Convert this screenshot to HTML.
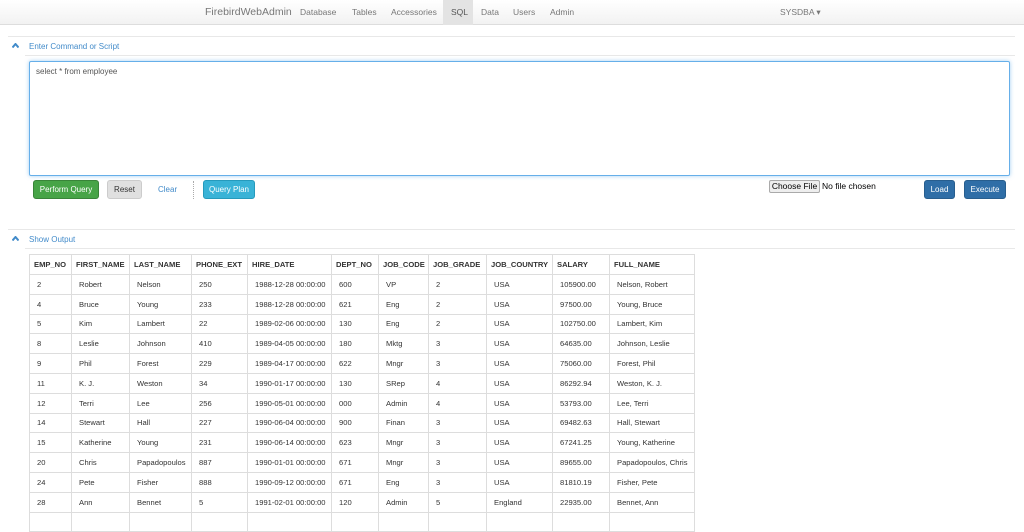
<!DOCTYPE html>
<html><head><style>
*{box-sizing:border-box;margin:0;padding:0}
body{width:1024px;height:516px;overflow:hidden;background:#fff;font-family:"Liberation Sans",sans-serif;font-size:8px;color:#333;position:relative}
.nav{position:absolute;left:0;top:0;width:1024px;height:25px;background:linear-gradient(#fff,#f2f2f2);border-bottom:1px solid #ddd}
.nav span{position:absolute;top:7px;color:#777;font-size:8.5px}
.brand{font-size:10.5px!important;top:6px!important;color:#777}
.act{position:absolute;left:443px;top:0;width:30px;height:25px;background:#e3e3e3}
.sec{position:absolute;left:8px;width:1007px;border-top:1px solid #e8e8e8}
.hd{position:absolute;color:#428bca;font-size:8px}
.chev{position:absolute;width:7px;height:5px}
.ln{position:absolute;left:25px;width:990px;border-top:1px solid #e8e8e8}
.ta{position:absolute;left:29px;top:61px;width:981px;height:115px;border:1px solid #66afe9;border-radius:2px;box-shadow:0 0 4px rgba(102,175,233,.6);padding:5px 6px;font-size:8px;color:#555}
.btn{position:absolute;height:19px;border-radius:3px;font-size:8px;text-align:center;line-height:17px;color:#fff}
table{position:absolute;left:29px;top:254px;border-collapse:collapse;font-size:7.6px;table-layout:fixed;width:665px}
td,th{border:1px solid #ddd;height:19.8px;padding:0 4px;text-align:left;white-space:nowrap;overflow:hidden}
th{font-weight:bold;height:20px}
td{padding-left:7px}
</style></head><body>
<div class="nav">
<div class="act"></div>
<span class="brand" style="left:205px">FirebirdWebAdmin</span>
<span style="left:300px">Database</span>
<span style="left:352px">Tables</span>
<span style="left:391px">Accessories</span>
<span style="left:451px;color:#555">SQL</span>
<span style="left:481px">Data</span>
<span style="left:513px">Users</span>
<span style="left:550px">Admin</span>
<span style="left:780px">SYSDBA ▾</span>
</div>
<div class="sec" style="top:36px"></div>
<svg class="chev" style="left:12px;top:43px" viewBox="0 0 7 5"><path d="M0.5 4.5L3.5 1L6.5 4.5" stroke="#428bca" stroke-width="2" fill="none"/></svg>
<div class="hd" style="left:29px;top:42px">Enter Command or Script</div>
<div class="ln" style="top:55px"></div>
<div class="ta">select * from employee</div>
<div class="btn" style="left:33px;top:180px;width:66px;background:#47a447;border:1px solid #398439">Perform Query</div>
<div class="btn" style="left:107px;top:180px;width:35px;background:#e0e0e0;color:#333;border:1px solid #ccc">Reset</div>
<div style="position:absolute;left:158px;top:185px;color:#428bca">Clear</div>
<div style="position:absolute;left:193px;top:181px;height:18px;border-left:1px dotted #aaa"></div>
<div class="btn" style="left:203px;top:180px;width:52px;background:#39b3d7;border:1px solid #269abc">Query Plan</div>
<div style="position:absolute;left:769px;top:180px;width:51px;height:13px;border:1px solid #aaa;background:#eee;border-radius:2px;font-size:8.5px;text-align:center;line-height:11px;color:#000">Choose File</div>
<div style="position:absolute;left:822px;top:181px;font-size:8.5px;color:#000">No file chosen</div>
<div class="btn" style="left:924px;top:180px;width:31px;background:#2f6ea7;border:1px solid #285e8e">Load</div>
<div class="btn" style="left:964px;top:180px;width:42px;background:#2f6ea7;border:1px solid #285e8e">Execute</div>
<div class="sec" style="top:229px"></div>
<svg class="chev" style="left:12px;top:236px" viewBox="0 0 7 5"><path d="M0.5 4.5L3.5 1L6.5 4.5" stroke="#428bca" stroke-width="2" fill="none"/></svg>
<div class="hd" style="left:29px;top:235px">Show Output</div>
<div class="ln" style="top:248px"></div>
<table>
<colgroup><col style="width:42px"><col style="width:58px"><col style="width:62px"><col style="width:56px"><col style="width:84px"><col style="width:47px"><col style="width:50px"><col style="width:58px"><col style="width:66px"><col style="width:57px"><col style="width:85px"></colgroup>
<tr><th>EMP_NO</th><th>FIRST_NAME</th><th>LAST_NAME</th><th>PHONE_EXT</th><th>HIRE_DATE</th><th>DEPT_NO</th><th>JOB_CODE</th><th>JOB_GRADE</th><th>JOB_COUNTRY</th><th>SALARY</th><th>FULL_NAME</th></tr>
<tr><td>2</td><td>Robert</td><td>Nelson</td><td>250</td><td>1988-12-28 00:00:00</td><td>600</td><td>VP</td><td>2</td><td>USA</td><td>105900.00</td><td>Nelson, Robert</td></tr>
<tr><td>4</td><td>Bruce</td><td>Young</td><td>233</td><td>1988-12-28 00:00:00</td><td>621</td><td>Eng</td><td>2</td><td>USA</td><td>97500.00</td><td>Young, Bruce</td></tr>
<tr><td>5</td><td>Kim</td><td>Lambert</td><td>22</td><td>1989-02-06 00:00:00</td><td>130</td><td>Eng</td><td>2</td><td>USA</td><td>102750.00</td><td>Lambert, Kim</td></tr>
<tr><td>8</td><td>Leslie</td><td>Johnson</td><td>410</td><td>1989-04-05 00:00:00</td><td>180</td><td>Mktg</td><td>3</td><td>USA</td><td>64635.00</td><td>Johnson, Leslie</td></tr>
<tr><td>9</td><td>Phil</td><td>Forest</td><td>229</td><td>1989-04-17 00:00:00</td><td>622</td><td>Mngr</td><td>3</td><td>USA</td><td>75060.00</td><td>Forest, Phil</td></tr>
<tr><td>11</td><td>K. J.</td><td>Weston</td><td>34</td><td>1990-01-17 00:00:00</td><td>130</td><td>SRep</td><td>4</td><td>USA</td><td>86292.94</td><td>Weston, K. J.</td></tr>
<tr><td>12</td><td>Terri</td><td>Lee</td><td>256</td><td>1990-05-01 00:00:00</td><td>000</td><td>Admin</td><td>4</td><td>USA</td><td>53793.00</td><td>Lee, Terri</td></tr>
<tr><td>14</td><td>Stewart</td><td>Hall</td><td>227</td><td>1990-06-04 00:00:00</td><td>900</td><td>Finan</td><td>3</td><td>USA</td><td>69482.63</td><td>Hall, Stewart</td></tr>
<tr><td>15</td><td>Katherine</td><td>Young</td><td>231</td><td>1990-06-14 00:00:00</td><td>623</td><td>Mngr</td><td>3</td><td>USA</td><td>67241.25</td><td>Young, Katherine</td></tr>
<tr><td>20</td><td>Chris</td><td>Papadopoulos</td><td>887</td><td>1990-01-01 00:00:00</td><td>671</td><td>Mngr</td><td>3</td><td>USA</td><td>89655.00</td><td>Papadopoulos, Chris</td></tr>
<tr><td>24</td><td>Pete</td><td>Fisher</td><td>888</td><td>1990-09-12 00:00:00</td><td>671</td><td>Eng</td><td>3</td><td>USA</td><td>81810.19</td><td>Fisher, Pete</td></tr>
<tr><td>28</td><td>Ann</td><td>Bennet</td><td>5</td><td>1991-02-01 00:00:00</td><td>120</td><td>Admin</td><td>5</td><td>England</td><td>22935.00</td><td>Bennet, Ann</td></tr>
<tr><td></td><td></td><td></td><td></td><td></td><td></td><td></td><td></td><td></td><td></td><td></td></tr>
</table>
</body></html>
